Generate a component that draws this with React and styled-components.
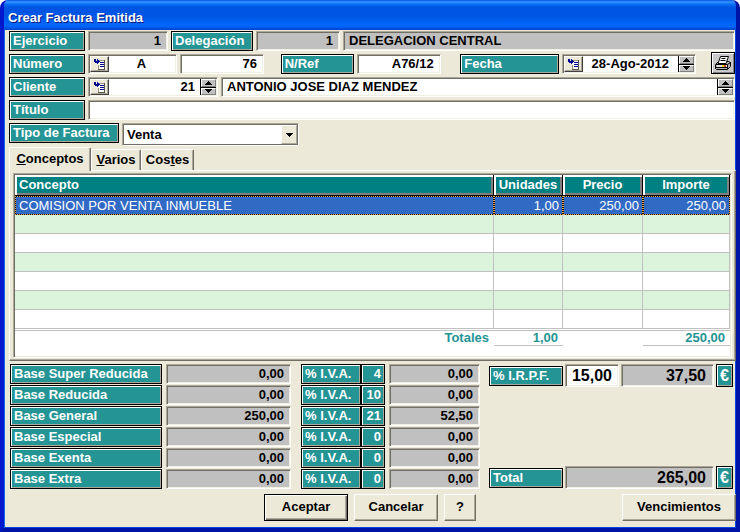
import React from "react";
import styled, { createGlobalStyle, css } from "styled-components";

const Global = createGlobalStyle`
  * { box-sizing: border-box; }
  body { margin: 0; background: #fff; }
  body, input, button, select { font: bold 13px/16px "Liberation Sans", Arial, sans-serif; color: #000; }
`;

const Window = styled.main`
  display: flex;
  flex-direction: column;
  min-height: 100vh;
  background: #ece9d8;
  border: 4px solid #0842dd;
  border-color: #0842dd #0014a8 #0014a8 #0019cf;
  border-top: 0;
  border-radius: 8px 8px 0 0;
  box-shadow: inset 1px 0 #166aee, inset -1px 0 #0846e0, inset 0 -1px #0846e0;
  overflow: hidden;
`;

const TitleBar = styled.header`
  flex: none;
  height: 30px;
  margin: 0 -4px;
  padding: 0 8px;
  display: flex;
  align-items: center;
  background: linear-gradient(#0058e6 0, #3a93ff 2px, #0873f8 4px, #0056e2 7px, #0055e5 16px, #0066fa 24px, #0063f5 27px, #003fc8 30px);
`;

const Title = styled.h1`
  margin: 5px 0 0;
  font-size: 13px;
  line-height: 16px;
  color: #fff;
  text-shadow: 1px 1px #0a1883;
`;

const Content = styled.div`
  flex: 1;
  display: flex;
  flex-direction: column;
  padding: 1px 0 7px 5px;
`;

const Form = styled.form`
  display: flex;
  flex-direction: column;
  gap: 3px;
  padding-right: 1px;
`;

const Row = styled.div`
  display: flex;
  align-items: flex-start;
  gap: 3px;
  height: 20px;
`;

const Gap = styled.span`
  flex: ${(p) => p.$grow || 0} 1 ${(p) => p.$w}px;
`;

const tag = css`
  display: block;
  flex: none;
  width: ${(p) => (p.$w ? `${p.$w}px` : "auto")};
  height: ${(p) => p.$h || 20}px;
  padding: 0 3px;
  border: 1px solid #000;
  background: #259494;
  box-shadow: inset 1px 1px #fff, inset -1px -1px #aca899;
  color: #fff;
  line-height: ${(p) => (p.$h || 20) - 2}px;
  white-space: nowrap;
  text-align: ${(p) => p.$align || "left"};
`;
const Tag = styled.label`${tag}`;
const Badge = styled.output`
  ${tag}
  padding: 0 ${(p) => (p.$size ? 0 : 3)}px;
  font-size: ${(p) => p.$size || 13}px;
`;

const FieldBox = styled.div`
  display: flex;
  flex: ${(p) => (p.$w ? `0 0 ${p.$w}px` : "1 1 0")};
  min-width: 0;
  height: ${(p) => p.$h || 20}px;
  background: ${(p) => (p.$off ? "#c0c0c0" : "#fff")};
  border: 1px solid;
  border-color: #aca899 #fff #fff #aca899;
  box-shadow: inset 1px 1px #716f64, inset -1px -1px #f1efe2;
  padding: 1px;
`;

const Input = styled.input`
  flex: 1 1 0;
  width: 0;
  min-width: 0;
  border: 0;
  outline: 0;
  background: transparent;
  padding: 0 ${(p) => p.$pad ?? 5}px 0 4px;
  font-size: ${(p) => p.$size || 13}px;
  text-align: ${(p) => p.$align || "right"};
`;

const PickButton = styled.button`
  flex: 0 0 19px;
  display: grid;
  place-items: center;
  padding: 0;
  background: #ece9d8;
  border: 1px solid;
  border-color: #fff #404040 #404040 #fff;
  box-shadow: inset -1px -1px #aca899;
`;

const Spinner = styled.div`
  flex: 0 0 16px;
  display: flex;
  flex-direction: column;
  gap: 1px;
  background: #000;
  border-left: 1px solid #000;
`;

const SpinButton = styled.button`
  flex: 1;
  min-height: 0;
  display: grid;
  place-items: center;
  padding: 0;
  border: 1px solid;
  border-color: #fff #808080 #808080 #fff;
  background: #c0c0c0;
`;

const PrintButton = styled.button`
  flex: 0 0 24px;
  height: 22px;
  margin-top: -2px;
  display: grid;
  place-items: center;
  padding: 0;
  border: 1px solid #000;
  background: #c8c8c8;
  box-shadow: inset 1px 1px #fff, inset -1px -1px #808080;
`;

const SelectBox = styled.div`
  position: relative;
  flex: 0 0 177px;
  height: 23px;
  border: 1px solid;
  border-color: #aca899 #fff #fff #aca899;
  box-shadow: inset 1px 1px #716f64, inset -1px -1px #716f64;
  background: #fff;
  padding: 1px;
`;

const Select = styled.select`
  appearance: none;
  width: 100%;
  height: 100%;
  border: 0;
  outline: 0;
  padding: 1px 20px 0 3px;
  background: transparent;
`;

const SelectArrow = styled.span`
  position: absolute;
  top: 1px;
  right: 1px;
  bottom: 1px;
  width: 16px;
  display: grid;
  place-items: center;
  pointer-events: none;
  background: #ece9d8;
  border: 1px solid;
  border-color: #fff #aca899 #aca899 #fff;
`;

const Tabs = styled.nav`
  display: flex;
  align-items: flex-end;
  height: 23px;
  margin-top: 4px;
`;

const Tab = styled.button`
  height: ${(p) => (p.$on ? 24 : 21)}px;
  width: ${(p) => p.$w}px;
  margin-bottom: ${(p) => (p.$on ? -1 : 0)}px;
  padding: 0 0 ${(p) => (p.$on ? 2 : 0)}px;
  position: relative;
  background: #ece9d8;
  border: solid;
  border-width: 1px 1px 0;
  border-color: #fff #716f64 #fff #fff;
  border-radius: 2px 2px 0 0;
  box-shadow: inset -1px 0 #aca899;
`;

const Panel = styled.section`
  flex: 1;
  display: flex;
  padding: 2px 3px;
  border: 1px solid;
  border-color: #fff #716f64 #716f64 #fff;
  box-shadow: inset -1px -1px #aca899;
`;

const Sheet = styled.div`
  flex: 1;
  min-width: 0;
  background: #fff;
  border: 1px solid;
  border-color: #aca899 #fff #fff #aca899;
  box-shadow: inset 1px 1px #716f64, inset -1px -1px #ece9d8;
  padding: 1px 1px 11px;
`;

const Table = styled.table`
  width: 100%;
  table-layout: fixed;
  border-collapse: separate;
  border-spacing: 0;
`;

const Col = styled.col`
  width: ${(p) => (p.$w ? `${p.$w}px` : "auto")};
`;

const Th = styled.th`
  height: 21px;
  padding: 0 4px;
  background: #008080;
  color: #fff;
  border: 1px solid #000;
  border-width: 0 1px 1px 0;
  box-shadow: inset 2px 2px #fff, inset -2px -2px #808080;
  text-align: ${(p) => p.$align || "center"};
`;

const Tr = styled.tr`
  background: ${(p) => (p.$tint ? "#dcf4dc" : "#fff")};
`;

const Td = styled.td`
  height: 19px;
  padding: 0 4px 0 3px;
  border: solid #c0c0c0;
  border-width: 0 1px 1px 0;
  text-align: ${(p) => p.$align || "right"};
  ${(p) =>
    p.$selected &&
    css`
      padding: 0 3px;
      color: #fff;
      font-weight: normal;
      border: 1px dotted #f0a850;
      background: linear-gradient(#316ac5, #316ac5) padding-box, #000 border-box;
    `}
`;

const TotalCell = styled.td`
  height: 15px;
  padding: 0 5px 0 0;
  color: #259494;
  text-align: right;
  line-height: 14px;
  border-bottom: 1px solid ${(p) => (p.$line ? "#c0c0c0" : "transparent")};
`;

const RuleCell = styled.td`
  height: 2px;
  padding: 0;
  border-bottom: 1px solid #c0c0c0;
`;

const Summary = styled.div`
  display: flex;
  align-items: stretch;
  padding: 3px 3px 0 1px;
`;

const BaseList = styled.div`
  flex: 1;
  display: flex;
  flex-direction: column;
  gap: 1px;
`;

const BaseRow = styled.div`
  display: flex;
`;

const Side = styled.div`
  flex: 0 0 244px;
  margin-left: 9px;
  display: flex;
  flex-direction: column;
  justify-content: space-between;
`;

const SideRow = styled.div`
  display: flex;
  align-items: center;
  gap: 2px;
`;

const Actions = styled.footer`
  display: flex;
  gap: 6px;
  margin-top: 5px;
  padding-left: 255px;
`;

const Button = styled.button`
  flex: none;
  width: ${(p) => p.$w}px;
  height: 27px;
  margin-left: ${(p) => (p.$end ? "auto" : 0)};
  padding: 0 0 1px;
  background: #ece9d8;
  border: 1px solid;
  border-color: ${(p) => (p.$primary ? "#000" : "#fff #716f64 #716f64 #fff")};
  box-shadow: ${(p) =>
    p.$primary
      ? "inset 1px 1px #fff, inset -1px -1px #716f64, inset -2px -2px #aca899"
      : "inset -1px -1px #aca899"};
`;

const PickIcon = () => (
  <svg width="13" height="12" viewBox="0 0 13 12" shapeRendering="crispEdges" aria-hidden="true">
    <path d="M5 2h7v9H5z" fill="#fff" />
    <path d="M11 2h1v10H5v-1h6z" fill="#55554e" />
    <path d="M6 2h5v1H6zM5 7h1v4H5z" fill="#99978c" />
    <path d="M1 1h2v2h1V1h1v1h1v1h1v1H6v1H5v1H4V5H2V4H1z" fill="#000090" />
    <path d="M7 4h4v1H7zM7 6h4v1H7zM7 8h4v1H7z" fill="#000090" />
  </svg>
);

const PrinterIcon = () => (
  <svg width="18" height="16" viewBox="0 0 18 16" aria-hidden="true">
    <path d="M1.5 9.5l3-3h10l2 1v4l-3 3h-11l-1-1z" fill="#b4b4b4" stroke="#000" />
    <path d="M6.5 1.5h8l-2.5 7h-8z" fill="#fff" stroke="#000" />
    <path d="M7.5 3.5h4M6.5 5.5h5" fill="none" stroke="#000" />
    <path d="M2 9.5h11.5V14M13.5 9.5l3-2" fill="none" stroke="#000" />
    <path d="M2 12.5h11" fill="none" stroke="#000" />
    <path d="M3 10h10v2H3z" fill="#e0e0e0" />
    <path d="M8 10h2v2H8z" fill="#f0d800" />
    <path d="M10 10h2v2h-2z" fill="#d05030" />
  </svg>
);

const Arrow = ({ up }) => (
  <svg width="7" height="4" viewBox="0 0 7 4" shapeRendering="crispEdges" aria-hidden="true">
    <path d={up ? "M3 0h1v1h1v1h1v1h1v1H0V3h1V2h1V1h1z" : "M0 0h7v1H6v1H5v1H4v1H3V3H2V2H1V1H0z"} />
  </svg>
);

function Field({ id, label, value, w, h, off, pick, spin, align, size, pad }) {
  return (
    <FieldBox $w={w} $h={h} $off={off}>
      {pick && <PickButton type="button" aria-label="Buscar"><PickIcon /></PickButton>}
      <Input id={id} aria-label={label} defaultValue={value} readOnly={off} $align={align} $size={size} $pad={pad} />
      {spin && (
        <Spinner>
          <SpinButton type="button" aria-label="Anterior"><Arrow up /></SpinButton>
          <SpinButton type="button" aria-label="Siguiente"><Arrow /></SpinButton>
        </Spinner>
      )}
    </FieldBox>
  );
}

const bases = [
  ["Base Super Reducida", "0,00", "4", "0,00"],
  ["Base Reducida", "0,00", "10", "0,00"],
  ["Base General", "250,00", "21", "52,50"],
  ["Base Especial", "0,00", "0", "0,00"],
  ["Base Exenta", "0,00", "0", "0,00"],
  ["Base Extra", "0,00", "0", "0,00"],
];

const emptyRows = [true, false, true, false, true, false];

export default function App() {
  return (
    <Window>
      <Global />
      <TitleBar><Title>Crear Factura Emitida</Title></TitleBar>
      <Content>
        <Form>
          <Row>
            <Tag $w={76} htmlFor="ejercicio">Ejercicio</Tag>
            <Field id="ejercicio" value="1" w={80} off />
            <Tag $w={82} htmlFor="delegacion">Delegación</Tag>
            <Field id="delegacion" value="1" w={84} off />
            <Field label="Nombre de la delegación" value="DELEGACION CENTRAL" off align="left" />
          </Row>
          <Row>
            <Tag $w={76} htmlFor="numero">Número</Tag>
            <Field id="numero" value="A" w={89} pick align="center" />
            <Field label="Número de factura" value="76" w={84} />
            <Gap $w={11} $grow={1} />
            <Tag $w={73} htmlFor="nref">N/Ref</Tag>
            <Field id="nref" value="A76/12" w={84} />
            <Gap $w={14} $grow={1} />
            <Tag $w={99} htmlFor="fecha">Fecha</Tag>
            <Field id="fecha" value="28-Ago-2012" w={134} pick spin align="center" />
            <Gap $w={9} />
            <PrintButton type="button" aria-label="Imprimir"><PrinterIcon /></PrintButton>
          </Row>
          <Row>
            <Tag $w={76} htmlFor="cliente">Cliente</Tag>
            <Field id="cliente" value="21" w={130} pick spin />
            <Field label="Nombre del cliente" value="ANTONIO JOSE DIAZ MENDEZ" spin align="left" />
          </Row>
          <Row>
            <Tag $w={76} htmlFor="titulo">Título</Tag>
            <Field id="titulo" value="" align="left" />
          </Row>
          <Row>
            <Tag $w={110} htmlFor="tipo">Tipo de Factura</Tag>
            <SelectBox>
              <Select id="tipo" defaultValue="Venta"><option>Venta</option></Select>
              <SelectArrow><Arrow /></SelectArrow>
            </SelectBox>
          </Row>
        </Form>

        <Tabs>
          <Tab $w={82} $on><u>C</u>onceptos</Tab>
          <Tab $w={50}><u>V</u>arios</Tab>
          <Tab $w={53}>Cos<u>t</u>es</Tab>
        </Tabs>
        <Panel>
          <Sheet>
            <Table>
              <colgroup><Col /><Col $w={69} /><Col $w={80} /><Col $w={87} /></colgroup>
              <thead>
                <tr><Th $align="left">Concepto</Th><Th>Unidades</Th><Th>Precio</Th><Th>Importe</Th></tr>
              </thead>
              <tbody>
                <tr>
                  <Td $selected $align="left">COMISION POR VENTA INMUEBLE</Td>
                  <Td $selected>1,00</Td><Td $selected>250,00</Td><Td $selected>250,00</Td>
                </tr>
                {emptyRows.map((tint, i) => (
                  <Tr key={i} $tint={tint}><Td /><Td /><Td /><Td /></Tr>
                ))}
              </tbody>
              <tfoot>
                <tr><RuleCell colSpan={4} /></tr>
                <tr>
                  <TotalCell>Totales</TotalCell>
                  <TotalCell $line>1,00</TotalCell>
                  <TotalCell />
                  <TotalCell $line>250,00</TotalCell>
                </tr>
              </tfoot>
            </Table>
          </Sheet>
        </Panel>

        <Summary>
          <BaseList>
            {bases.map(([name, base, pct, tax], i) => (
              <BaseRow key={name}>
                <Tag $w={152} htmlFor={`base${i}`}>{name}</Tag>
                <Gap $w={4} />
                <Field id={`base${i}`} value={base} off />
                <Gap $w={10} />
                <Tag $w={60} htmlFor={`iva${i}`}>% I.V.A.</Tag>
                <Badge $w={24} $align="right">{pct}</Badge>
                <Gap $w={4} />
                <Field id={`iva${i}`} value={tax} w={91} off />
              </BaseRow>
            ))}
          </BaseList>
          <Side>
            <SideRow>
              <Tag $w={74} htmlFor="irpf">% I.R.P.F.</Tag>
              <Field id="irpf" value="15,00" w={54} h={23} size={16} />
              <Field label="Importe I.R.P.F." value="37,50" h={23} off size={16} pad={6} />
              <Badge $w={17} $h={23} $size={16} $align="center">€</Badge>
            </SideRow>
            <SideRow>
              <Tag $w={74} htmlFor="total">Total</Tag>
              <Field id="total" value="265,00" h={23} off size={16} pad={6} />
              <Badge $w={17} $h={23} $size={16} $align="center">€</Badge>
            </SideRow>
          </Side>
        </Summary>

        <Actions>
          <Button type="button" $w={84} $primary>Aceptar</Button>
          <Button type="button" $w={84}>Cancelar</Button>
          <Button type="button" $w={32}>?</Button>
          <Button type="button" $w={114} $end>Vencimientos</Button>
        </Actions>
      </Content>
    </Window>
  );
}
